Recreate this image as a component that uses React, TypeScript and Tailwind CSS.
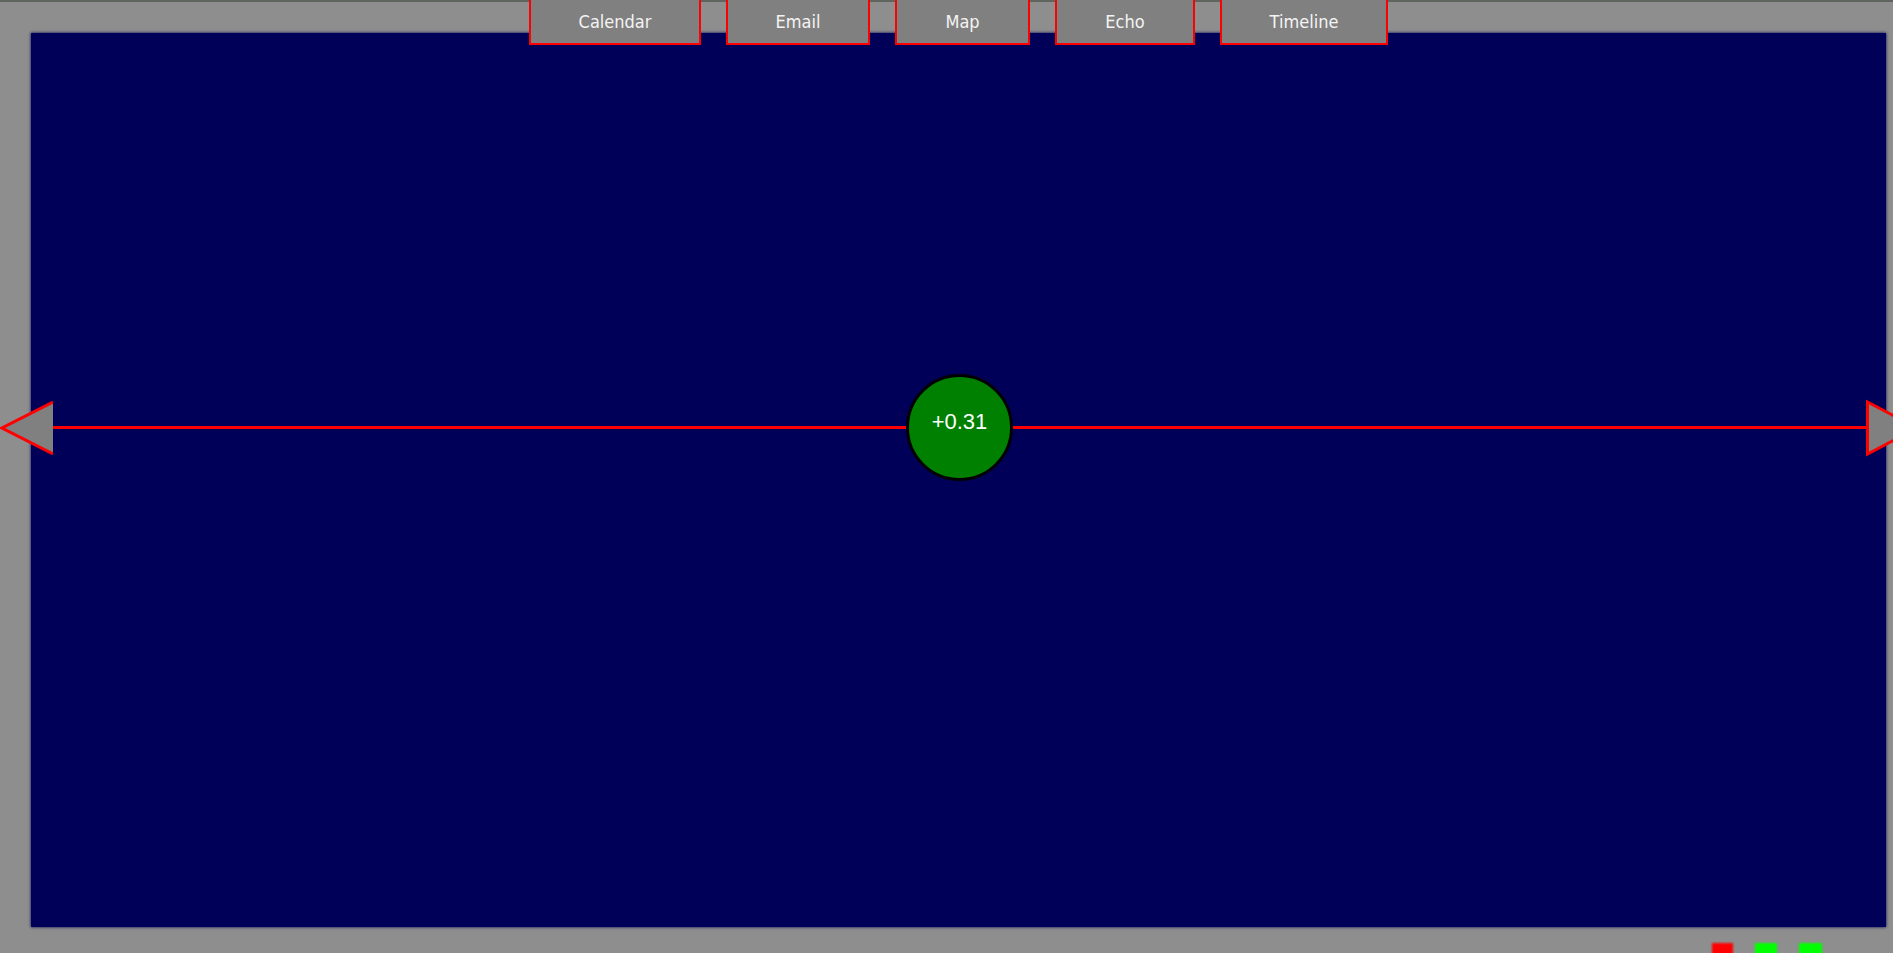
import React from "react";

const tabs = [
	{ label: "Calendar", w: "w-[172px]" },
	{ label: "Email", w: "w-[144px]" },
	{ label: "Map", w: "w-[135px]" },
	{ label: "Echo", w: "w-[140px]" },
	{ label: "Timeline", w: "w-[168px]" },
];

function LeftArrow() {
	return (
		<svg width="53" height="58" viewBox="0 0 53 58" className="shrink-0">
			<polygon points="2,29 53,3 53,55" fill="#808080" />
			<polyline points="53,3 2,29 53,55" fill="none" stroke="#ff0000" strokeWidth="3" />
		</svg>
	);
}

function RightArrow() {
	return (
		<svg width="53" height="58" viewBox="0 0 53 58" className="shrink-0">
			<polygon points="1.5,3 51,29 1.5,55" fill="#808080" stroke="#ff0000" strokeWidth="3" />
		</svg>
	);
}

export default function App() {
	return (
		<div
			className="relative h-[953px] w-full overflow-hidden bg-[#8e8e8e] flex flex-col"
			style={{ fontFamily: '"Liberation Sans", Arial, sans-serif' }}
		>
			<div className="h-[2px] bg-[#5d655d] shrink-0" />

			{/* main panel */}
			<div className="mt-[31px] ml-[31px] mr-[7px] h-[894px] shrink-0 bg-[#000058] shadow-[0_0_3px_#000058] flex flex-col">
				<div className="pt-[341px] -ml-[31px] w-[1919px] flex flex-row items-center">
					<LeftArrow />
					<div className="flex-1 h-[3px] bg-[#ff0000]" />
					<div className="w-[107px] h-[107px] shrink-0 rounded-full border-[3px] border-black bg-[#008000] flex items-center justify-center pb-[12px]">
						<span className="text-[22px] text-white">+0.31</span>
					</div>
					<div className="flex-1 h-[3px] bg-[#ff0000]" />
					<RightArrow />
				</div>
			</div>

			{/* status lights */}
			<div className="flex flex-row justify-end gap-[22px] pr-[71px] mt-[16px]">
				<div className="w-[21px] h-[14px] bg-[#ff0000] blur-[1px]" />
				<div className="w-[22px] h-[14px] bg-[#00ff00] blur-[1px]" />
				<div className="w-[23px] h-[14px] bg-[#00ff00] blur-[1px]" />
			</div>

			{/* tab bar */}
			<div className="absolute top-0 left-[30px] right-[6px] flex flex-row justify-center gap-[25px]">
				{tabs.map((t) => (
					<div
						key={t.label}
						className={`${t.w} h-[45px] bg-[#808080] border-2 border-t-0 border-[#ff0000] flex items-center justify-center text-[18px] text-[#f4f4f4]`}
						style={{ fontFamily: '"DejaVu Sans Condensed", "DejaVu Sans", sans-serif', fontStretch: "condensed" }}
					>
						{t.label}
					</div>
				))}
			</div>
		</div>
	);
}
